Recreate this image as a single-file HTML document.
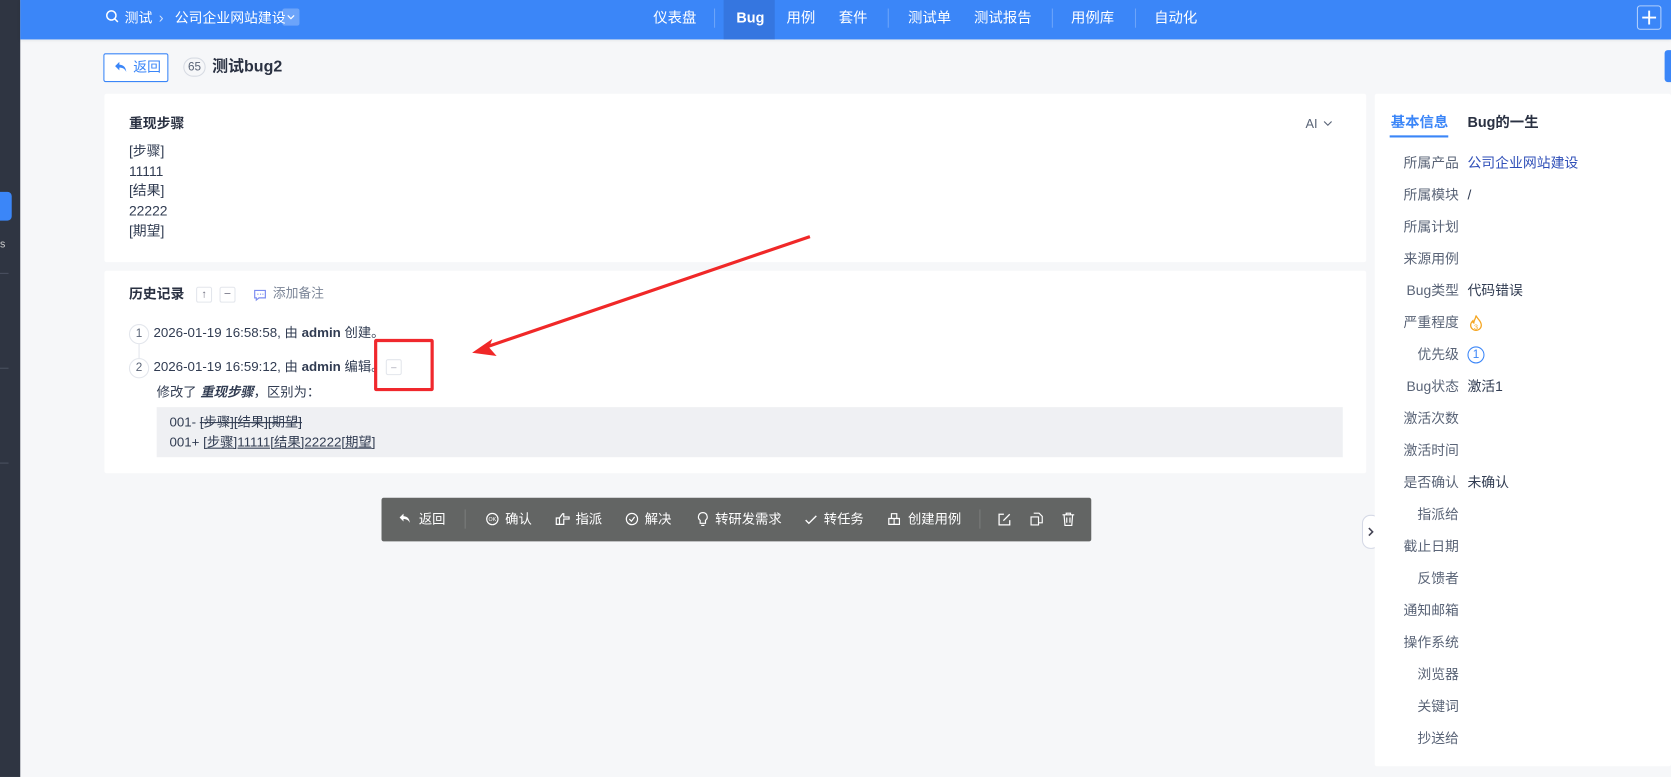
<!DOCTYPE html>
<html><head><meta charset="utf-8">
<style>
*{box-sizing:border-box;margin:0;padding:0}
html,body{width:1671px;height:777px;overflow:hidden;background:#f6f7f9}
body{font-family:"Liberation Sans","Noto Sans CJK SC",sans-serif;color:#313c52;font-size:13px}
#w{position:absolute;left:0;top:0;width:1568px;height:729px;transform:scale(1.06569,1.0658);transform-origin:0 0;background:#f6f7f9}
.a{position:absolute;white-space:nowrap;line-height:1.2}
.side{left:0;top:0;width:19px;height:729px;background:#2f3542}
.top{left:19px;top:0;width:1549px;height:37px;background:#3b86f8;box-shadow:0 1px 3px rgba(0,0,0,.08)}
.nav{color:#fff;font-size:13.5px;top:9px}
.sep{top:8px;width:1px;height:18px;background:rgba(255,255,255,.25)}
.card{background:#fff;border-radius:2px}
.lbl{width:80px;text-align:right;left:1289px;color:#5a6477}
.val{left:1377px;color:#313c52}
.tb{color:#fff;font-size:12.5px;top:480px}
</style></head><body><div id="w">
<div class="a side"></div>
<div class="a" style="left:0;top:180px;width:11px;height:27px;background:#3b86f8;border-radius:0 4px 4px 0"></div>
<div class="a" style="left:0;top:224px;color:#ccc;font-size:10px">s</div>
<div class="a" style="left:0;top:256px;width:8px;height:1px;background:#4a5060"></div>
<div class="a" style="left:0;top:345px;width:8px;height:1px;background:#4a5060"></div>
<div class="a" style="left:0;top:434px;width:8px;height:1px;background:#4a5060"></div>

<div class="a top"></div>
<svg class="a" style="left:99px;top:9px" width="13" height="13" viewBox="0 0 13 13"><circle cx="5.5" cy="5.5" r="4.3" fill="none" stroke="#fff" stroke-width="1.4"/><path d="M8.6 8.6l3 3" stroke="#fff" stroke-width="1.4"/></svg>
<div class="a nav" style="left:117px;font-size:13px">测试</div>
<div class="a nav" style="left:149px;color:#cfe0fd">›</div>
<div class="a nav" style="left:164px;font-size:13px">公司企业网站建设</div>
<div class="a" style="left:265px;top:8px;width:16px;height:16px;background:rgba(255,255,255,.25);border-radius:2px"></div>
<svg class="a" style="left:268px;top:12px" width="10" height="8"><path d="M2 2.5l3 3 3-3" fill="none" stroke="#fff" stroke-width="1.1"/></svg>
<div class="a nav" style="left:613px">仪表盘</div>
<div class="a sep" style="left:670px"></div>
<div class="a" style="left:679px;top:0;width:48px;height:37px;background:#3576e0"></div>
<div class="a nav" style="left:691px;font-weight:bold">Bug</div>
<div class="a nav" style="left:738px">用例</div>
<div class="a nav" style="left:787px">套件</div>
<div class="a sep" style="left:833px"></div>
<div class="a nav" style="left:852px">测试单</div>
<div class="a nav" style="left:914px">测试报告</div>
<div class="a sep" style="left:987px"></div>
<div class="a nav" style="left:1005px">用例库</div>
<div class="a sep" style="left:1065px"></div>
<div class="a nav" style="left:1083px">自动化</div>
<div class="a" style="left:1536px;top:5px;width:23px;height:23px;border:1px solid rgba(255,255,255,.6);border-radius:3px"></div>
<svg class="a" style="left:1540px;top:9px" width="15" height="15"><path d="M7.5 1v13M1 7.5h13" stroke="#fff" stroke-width="1.8"/></svg>

<div class="a" style="left:97px;top:50px;width:61px;height:27px;border:1px solid #3b86f8;border-radius:2px;background:#fff"></div>
<svg class="a" style="left:107px;top:57px" width="13" height="12" viewBox="0 0 13 12"><path d="M5 1L1 5l4 4V6.5c3 0 5 1 6.5 4C11 6 9 4 5 3.6z" fill="#3b86f8"/></svg>
<div class="a" style="left:125px;top:55px;color:#3b86f8">返回</div>
<div class="a" style="left:172px;top:54px;width:21px;height:18px;border:1px solid #d7dbe3;border-radius:9px;font-size:11px;text-align:center;line-height:16px;color:#5a6477">65</div>
<div class="a" style="left:199px;top:54px;font-size:15px;font-weight:bold;color:#2a3142">测试bug2</div>
<div class="a" style="left:1562px;top:47px;width:6px;height:30px;background:#3b86f8;border-radius:3px 0 0 3px"></div>

<div class="a card" style="left:98px;top:88px;width:1184px;height:158px"></div>
<div class="a" style="left:121px;top:108px;font-weight:bold;color:#2a3142">重现步骤</div>
<div class="a" style="left:1225px;top:109px;font-size:12px;color:#5a6477">AI</div>
<svg class="a" style="left:1241px;top:112px" width="10" height="8"><path d="M1.5 2l3.5 3.5 3.5-3.5" fill="none" stroke="#5a6477" stroke-width="1.1"/></svg>
<div class="a" style="left:121px;top:133px;line-height:18.7px">[步骤]<br>11111<br>[结果]<br>22222<br>[期望]</div>

<div class="a card" style="left:98px;top:254px;width:1184px;height:190px"></div>
<div class="a" style="left:121px;top:268px;font-weight:bold;color:#2a3142">历史记录</div>
<div class="a" style="left:184px;top:269px;width:15px;height:15px;border:1px solid #e3e6ec;border-radius:2px;font-size:10px;text-align:center;line-height:13px;color:#667">↑</div>
<div class="a" style="left:206px;top:269px;width:15px;height:15px;border:1px solid #e3e6ec;border-radius:2px;font-size:10px;text-align:center;line-height:12px;color:#667">–</div>
<svg class="a" style="left:238px;top:271px" width="12" height="12" viewBox="0 0 12 12"><path d="M1 1.5h10v7H5l-2.5 2v-2H1z" fill="none" stroke="#7b8cf0" stroke-width="1.1"/><path d="M3.5 5h1M6 5h1M8.2 5h1" stroke="#7b8cf0"/></svg>
<div class="a" style="left:256px;top:268px;font-size:12px;color:#7b8597">添加备注</div>
<div class="a" style="left:130px;top:322px;width:1px;height:16px;background:#e3e6ec"></div>
<div class="a" style="left:121px;top:304px;width:19px;height:19px;border:1px solid #e3e6ec;border-radius:50%;background:#fff;font-size:11px;text-align:center;line-height:17px;color:#5a6477">1</div>
<div class="a" style="left:121px;top:336px;width:19px;height:19px;border:1px solid #e3e6ec;border-radius:50%;background:#fff;font-size:11px;text-align:center;line-height:17px;color:#5a6477">2</div>
<div class="a" style="left:144px;top:305px;font-size:12.5px">2026-01-19 16:58:58, 由 <b>admin</b> 创建。</div>
<div class="a" style="left:144px;top:337px;font-size:12.5px">2026-01-19 16:59:12, 由 <b>admin</b> 编辑。</div>
<div class="a" style="left:362px;top:337px;width:15px;height:15px;border:1px solid #e3e6ec;border-radius:2px;font-size:9px;text-align:center;line-height:12px;color:#99a">–</div>
<div class="a" style="left:351px;top:318px;width:56px;height:49px;border:3px solid #f0282d;border-radius:2px"></div>
<div class="a" style="left:147px;top:361px;font-size:12.5px">修改了 <b><i>重现步骤</i></b>，区别为：</div>
<div class="a" style="left:147px;top:382px;width:1113px;height:47px;background:#eff0f3"></div>
<div class="a" style="left:159px;top:387px;font-size:12.5px;line-height:19px">001- <s>[步骤][结果][期望]</s><br>001+ <u>[步骤]11111[结果]22222[期望]</u></div>

<svg class="a" style="left:0;top:0" width="1568" height="729"><path d="M760 222 L455 326" stroke="#f02828" stroke-width="3"/><path d="M443 331 L462 318 L459 326 L466 334 Z" fill="#f02828"/></svg>

<div class="a" style="left:358px;top:467px;width:666px;height:41px;background:#636564;border-radius:2px"></div>
<svg class="a" style="left:374px;top:481px" width="12" height="11" viewBox="0 0 13 12"><path d="M5 1L1 5l4 4V6.5c3 0 5 1 6.5 4C11 6 9 4 5 3.6z" fill="#fff"/></svg>
<div class="a tb" style="left:393px">返回</div>
<div class="a" style="left:436px;top:478px;width:1px;height:18px;background:#7a7c7b"></div>
<svg class="a" style="left:456px;top:481px" width="12" height="12"><circle cx="6" cy="6" r="5.3" fill="none" stroke="#fff" stroke-width="1.1"/><text x="6" y="8" font-size="5" fill="#fff" text-anchor="middle" font-family="Liberation Sans">OK</text></svg>
<div class="a tb" style="left:474px">确认</div>
<svg class="a" style="left:521px;top:481px" width="14" height="12" viewBox="0 0 14 12"><path d="M1 5v6h3V5zM4 5l3-4h1v3h5v2H8v5H4" fill="none" stroke="#fff" stroke-width="1.1"/></svg>
<div class="a tb" style="left:540px">指派</div>
<svg class="a" style="left:587px;top:481px" width="12" height="12"><circle cx="6" cy="6" r="5.3" fill="none" stroke="#fff" stroke-width="1.1"/><path d="M3.5 6l2 2 3-4" fill="none" stroke="#fff" stroke-width="1.1"/></svg>
<div class="a tb" style="left:605px">解决</div>
<svg class="a" style="left:654px;top:480px" width="11" height="14" viewBox="0 0 11 14"><path d="M5.5 1a4 4 0 0 0-2.5 7.2V11h5V8.2A4 4 0 0 0 5.5 1zM4 13h3" fill="none" stroke="#fff" stroke-width="1.1"/></svg>
<div class="a tb" style="left:671px">转研发需求</div>
<svg class="a" style="left:755px;top:483px" width="12" height="10"><path d="M1 5l3 3 7-7" fill="none" stroke="#fff" stroke-width="1.3"/></svg>
<div class="a tb" style="left:773px">转任务</div>
<svg class="a" style="left:833px;top:481px" width="12" height="12"><path d="M3.5 1h5v4.5h-5zM1 5.5h5v5.5H1zM6 5.5h5v5.5H6z" fill="none" stroke="#fff" stroke-width="1.1"/></svg>
<div class="a tb" style="left:852px">创建用例</div>
<div class="a" style="left:919px;top:478px;width:1px;height:18px;background:#7a7c7b"></div>
<svg class="a" style="left:936px;top:481px" width="13" height="13"><path d="M6 1.5H1.5v10h10V7" fill="none" stroke="#fff" stroke-width="1.2"/><path d="M5.5 7.5L11.5 1.5" stroke="#fff" stroke-width="1.2"/></svg>
<svg class="a" style="left:966px;top:480px" width="13" height="14"><path d="M4 1.5h5l3 3v6H9M1.5 5h7v7.5h-7z" fill="none" stroke="#fff" stroke-width="1.1"/></svg>
<svg class="a" style="left:996px;top:480px" width="13" height="14"><path d="M1 3h11M4.5 3V1.5h4V3M2.5 3l.8 10h6.4l.8-10M5 5.5v5M8 5.5v5" fill="none" stroke="#fff" stroke-width="1.1"/></svg>

<div class="a" style="left:1278px;top:483px;width:17px;height:32px;border:1px solid #d5d9e6;border-radius:8px;background:#fff"></div>
<svg class="a" style="left:1283px;top:494px" width="7" height="10"><path d="M1.5 1.5l3.5 3.5-3.5 3.5" fill="none" stroke="#445" stroke-width="1.5"/></svg>

<div class="a card" style="left:1290px;top:88px;width:278px;height:631px"></div>
<div class="a" style="left:1305px;top:107px;font-weight:bold;color:#3b86f8;font-size:13.5px">基本信息</div>
<div class="a" style="left:1304px;top:127px;width:55px;height:2px;background:#3b86f8"></div>
<div class="a" style="left:1377px;top:107px;font-weight:bold;color:#2a3142;font-size:13.5px">Bug的一生</div>

<div class="a lbl" style="top:145px">所属产品</div><div class="a val" style="top:145px;color:#2f4fb8">公司企业网站建设</div>
<div class="a lbl" style="top:175px">所属模块</div><div class="a val" style="top:175px">/</div>
<div class="a lbl" style="top:205px">所属计划</div>
<div class="a lbl" style="top:235px">来源用例</div>
<div class="a lbl" style="top:265px">Bug类型</div><div class="a val" style="top:265px">代码错误</div>
<div class="a lbl" style="top:295px">严重程度</div>
<svg class="a" style="left:1377px;top:295px" width="16" height="17" viewBox="0 0 16 17"><path d="M8 1c1 3 5 5 5 9a5 5 0 0 1-10 0c0-2 1-3 2-4 0 2 1 2 1 2 0-3 2-4 2-7z" fill="none" stroke="#f5a623" stroke-width="1.2"/><text x="8" y="14" font-size="7" fill="#f5a623" text-anchor="middle" font-family="Liberation Sans">3</text></svg>
<div class="a lbl" style="top:325px">优先级</div>
<div class="a" style="left:1377px;top:325px;width:16px;height:16px;border:1.3px solid #3b86f8;border-radius:50%;color:#3b86f8;font-size:11px;text-align:center;line-height:14px">1</div>
<div class="a lbl" style="top:355px">Bug状态</div><div class="a val" style="top:355px">激活1</div>
<div class="a lbl" style="top:385px">激活次数</div>
<div class="a lbl" style="top:415px">激活时间</div>
<div class="a lbl" style="top:445px">是否确认</div><div class="a val" style="top:445px">未确认</div>
<div class="a lbl" style="top:475px">指派给</div>
<div class="a lbl" style="top:505px">截止日期</div>
<div class="a lbl" style="top:535px">反馈者</div>
<div class="a lbl" style="top:565px">通知邮箱</div>
<div class="a lbl" style="top:595px">操作系统</div>
<div class="a lbl" style="top:625px">浏览器</div>
<div class="a lbl" style="top:655px">关键词</div>
<div class="a lbl" style="top:685px">抄送给</div>
</div></body></html>
